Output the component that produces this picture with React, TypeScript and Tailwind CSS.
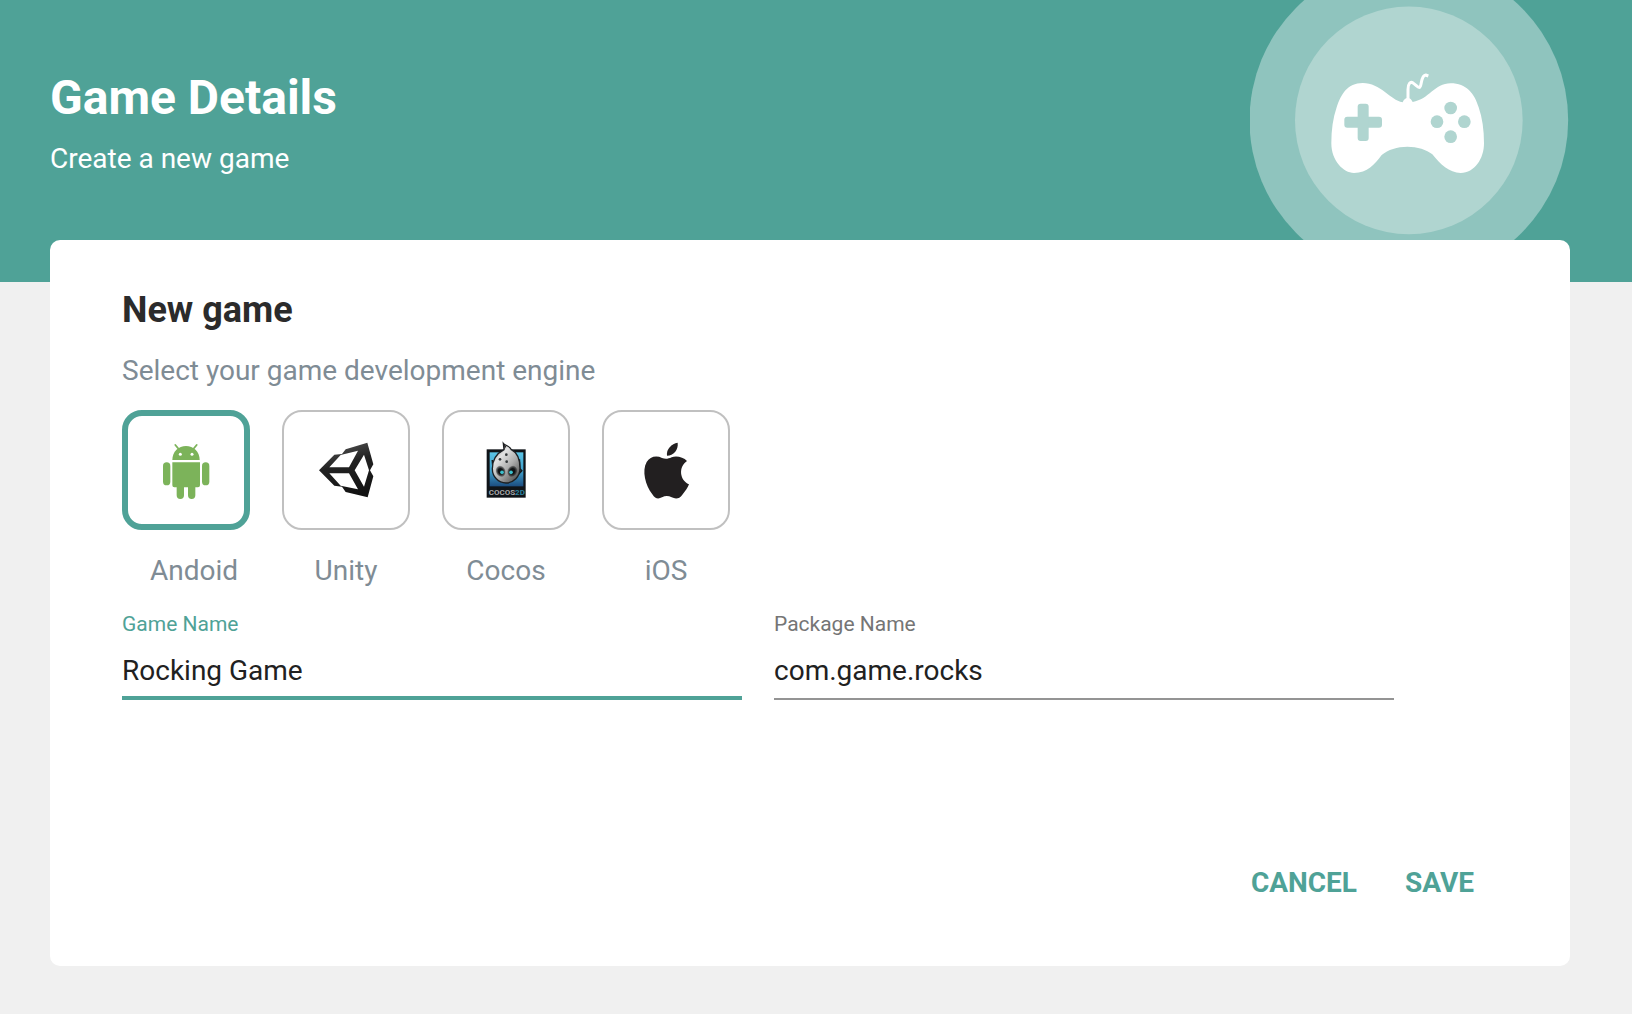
import type { ReactNode } from "react";

function GamepadBadge() {
  return (
    <svg viewBox="60 0 960 720" className="h-[240px] w-[320px] shrink-0" aria-hidden="true">
      <circle cx="536.5" cy="361" r="478" fill="#8fc4be" />
      <circle cx="536.5" cy="361" r="341.5" fill="#b0d5d0" />
      <path
        fill="#fff"
        d="M518 307C480 300 452 249 398 249C352 249 333 283 320 322C309 354 304 390 304 430C304 482 340 519 372 519C412 519 434 493 455 465C474 449 502 440 532 440C562 440 590 449 607 463C630 492 658 519 692 519C734 519 762 476 762 430C762 390 757 354 746 322C733 280 709 250 662 250C613 250 598 298 548 306C545 299 540 294 533 294C526 294 521 299 518 307Z"
      />
      <path
        d="M534 300V268C534 250 541 245 548 248C558 254 563 264 569 262C576 258 572 226 587 225L595 228"
        fill="none"
        stroke="#fff"
        strokeWidth="9"
        strokeLinejoin="round"
      />
      <g fill="#b0d5d0">
        <rect x="343" y="350" width="113" height="33" rx="9" />
        <rect x="383" y="311" width="33" height="112" rx="9" />
        <circle cx="662" cy="324" r="19" />
        <circle cx="621" cy="365" r="19" />
        <circle cx="703" cy="365" r="19" />
        <circle cx="662" cy="410" r="19" />
      </g>
    </svg>
  );
}

function AndroidIcon() {
  return (
    <svg viewBox="132 114 192 192" className="size-16 shrink-0" aria-hidden="true">
      <g fill="#7cb35a">
        <path d="M187 180C187 154 206 138 228 138C250 138 269 154 269 180Z" />
        <path d="M196 135L206 147M260 135L250 147" stroke="#7cb35a" strokeWidth="5.5" strokeLinecap="round" />
        <rect x="159" y="187" width="22" height="69" rx="11" />
        <rect x="276" y="187" width="22" height="69" rx="11" />
        <path d="M187 187H270V256Q270 262 264 262H256V286Q256 297 245 297Q234 297 234 286V262H222V286Q222 297 211 297Q200 297 200 286V262H193Q187 262 187 256Z" />
      </g>
      <circle cx="211" cy="163" r="4.5" fill="#fff" />
      <circle cx="246" cy="163" r="4.5" fill="#fff" />
    </svg>
  );
}

function UnityIcon() {
  return (
    <svg viewBox="612 114 192 192" className="size-16 shrink-0" aria-hidden="true">
      <defs>
        <linearGradient id="unity" x1="0.3" y1="0" x2="0.6" y2="1">
          <stop offset="0" stopColor="#555" />
          <stop offset="0.4" stopColor="#222" />
          <stop offset="1" stopColor="#111" />
        </linearGradient>
      </defs>
      <path
        fill="url(#unity)"
        fillRule="evenodd"
        d="M627 211L673 164L696 162L707 148L772 128L790 193L780 211L790 229L773 292L707 276L696 260L673 257ZM658 202L692 165L744 152L717 202ZM658 220H717L744 268L692 257ZM734 211L762 164L777 211L762 260Z"
      />
    </svg>
  );
}

function CocosIcon() {
  return (
    <svg viewBox="132 114 192 192" className="size-16 shrink-0" aria-hidden="true">
      <defs>
        <linearGradient id="cocosSky" x1="0" y1="0" x2="0" y2="1">
          <stop offset="0" stopColor="#5bc4e6" />
          <stop offset="0.55" stopColor="#3fa0cc" />
          <stop offset="1" stopColor="#1c4d80" />
        </linearGradient>
        <linearGradient id="cocosFace" x1="0.1" y1="0" x2="0.9" y2="1">
          <stop offset="0" stopColor="#8a8a8a" />
          <stop offset="0.3" stopColor="#e2e2e2" />
          <stop offset="0.6" stopColor="#adadad" />
          <stop offset="1" stopColor="#444" />
        </linearGradient>
        <radialGradient id="cocosEye">
          <stop offset="0.5" stopColor="#101214" />
          <stop offset="1" stopColor="#101214" stopOpacity="0.3" />
        </radialGradient>
      </defs>
      <rect x="170" y="148" width="117" height="145" fill="#101418" />
      <rect x="179" y="157" width="101" height="102" fill="url(#cocosSky)" />
      <path d="M187 180L190 213L197 225M268 178L269 206L275 212L266 222" fill="none" stroke="#14191d" strokeWidth="5" />
      <path
        d="M220 130C226 137 240 138 244 149C262 158 270 181 270 205C270 230 251 249 228 249C205 249 187 230 187 206C187 178 201 160 222 149Z"
        fill="url(#cocosFace)"
        stroke="#1d2023"
        strokeWidth="4"
      />
      <path d="M220 131C224 138 223 144 222 150L229 139Z" fill="#252525" />
      <g fill="#34383a">
        <circle cx="229" cy="164" r="4" />
        <circle cx="210" cy="178" r="4" />
        <circle cx="230" cy="185" r="4" />
      </g>
      <ellipse cx="212" cy="214" rx="14" ry="17" fill="url(#cocosEye)" transform="rotate(-25 212 214)" />
      <ellipse cx="247" cy="214" rx="14" ry="17" fill="url(#cocosEye)" transform="rotate(25 247 214)" />
      <circle cx="216" cy="217" r="5.5" fill="#3cc0cd" />
      <circle cx="243" cy="217" r="5.5" fill="#3cc0cd" />
      <text x="176" y="284" fontFamily="Roboto, sans-serif" fontWeight="700" fontSize="24" fill="#a8a8a8">
        COCOS<tspan fill="#2d83a0">2D</tspan>
      </text>
    </svg>
  );
}

function AppleIcon() {
  return (
    <svg viewBox="612 114 192 192" className="size-16 shrink-0" aria-hidden="true">
      <g fill="#221f20">
        <path d="M743 128C746 149 730 167 711 167C708 147 725 131 743 128Z" />
        <path d="M771 183C760 171 738 166 725 172C714 177 706 178 696 174C678 165 659 171 650 186C635 212 646 256 667 283C676 297 685 298 696 292C706 287 715 287 725 292C737 298 748 297 757 284C767 272 773 263 777 253C748 240 745 200 771 183Z" />
      </g>
    </svg>
  );
}

function EngineOption({ label, icon, selected = false }: { label: string; icon: ReactNode; selected?: boolean }) {
  return (
    <div className="flex w-32 flex-col">
      <button
        type="button"
        aria-pressed={selected}
        className={
          selected
            ? "flex h-[120px] w-32 items-center justify-center rounded-[20px] border-6 border-[#4fa297]"
            : "flex h-[120px] w-32 items-center justify-center rounded-[20px] border-2 border-[#c0c0c0]"
        }
      >
        {icon}
      </button>
      <span
        className={
          selected
            ? "mt-[25px] pl-4 text-center text-[28px] leading-8 text-[#7f8c95]"
            : "mt-[25px] text-center text-[28px] leading-8 text-[#7f8c95]"
        }
      >
        {label}
      </span>
    </div>
  );
}

function TextField({ label, value, focused = false }: { label: string; value: string; focused?: boolean }) {
  return (
    <label className="flex w-[620px] flex-col">
      <span
        className={
          focused
            ? "text-[21px] leading-6 text-[#4fa297]"
            : "text-[21px] leading-6 text-[#757575]"
        }
      >
        {label}
      </span>
      <input
        type="text"
        defaultValue={value}
        className={
          focused
            ? "mt-4 h-12 border-b-4 border-[#4fa297] pb-2 text-[28px] text-[#212121] outline-none"
            : "mt-4 h-12 border-b-2 border-[#949494] pb-2.5 text-[28px] text-[#212121] outline-none"
        }
      />
    </label>
  );
}

export default function App() {
  return (
    <div className="min-h-screen bg-[#f0f0f0] pb-12 font-['Roboto',sans-serif]">
      <header className="flex h-[282px] items-start justify-between bg-[#4fa297] pr-[62px] pl-[50px] text-white">
        <div className="pt-[70px]">
          <h1 className="text-[48px] leading-[56px] font-bold">Game Details</h1>
          <p className="mt-[17px] text-[28px] leading-8">Create a new game</p>
        </div>
        <GamepadBadge />
      </header>
      <main className="relative mt-[-42px] mr-[62px] ml-[50px] flex h-[726px] flex-col rounded-[10px] bg-white px-[72px] pt-[49px]">
        <h2 className="text-[36px] leading-[42px] font-bold text-[#2b2b2b]">New game</h2>
        <p className="mt-6 text-[28px] leading-8 text-[#7f8c95]">Select your game development engine</p>
        <div className="mt-[23px] flex gap-8">
          <EngineOption label="Andoid" icon={<AndroidIcon />} selected />
          <EngineOption label="Unity" icon={<UnityIcon />} />
          <EngineOption label="Cocos" icon={<CocosIcon />} />
          <EngineOption label="iOS" icon={<AppleIcon />} />
        </div>
        <form className="mt-[25px] flex gap-8">
          <TextField label="Game Name" value="Rocking Game" focused />
          <TextField label="Package Name" value="com.game.rocks" />
        </form>
        <div className="mt-[167px] mr-6 flex justify-end gap-12 text-[28px] leading-8 font-bold text-[#4fa297]">
          <button type="button">CANCEL</button>
          <button type="button">SAVE</button>
        </div>
      </main>
    </div>
  );
}
